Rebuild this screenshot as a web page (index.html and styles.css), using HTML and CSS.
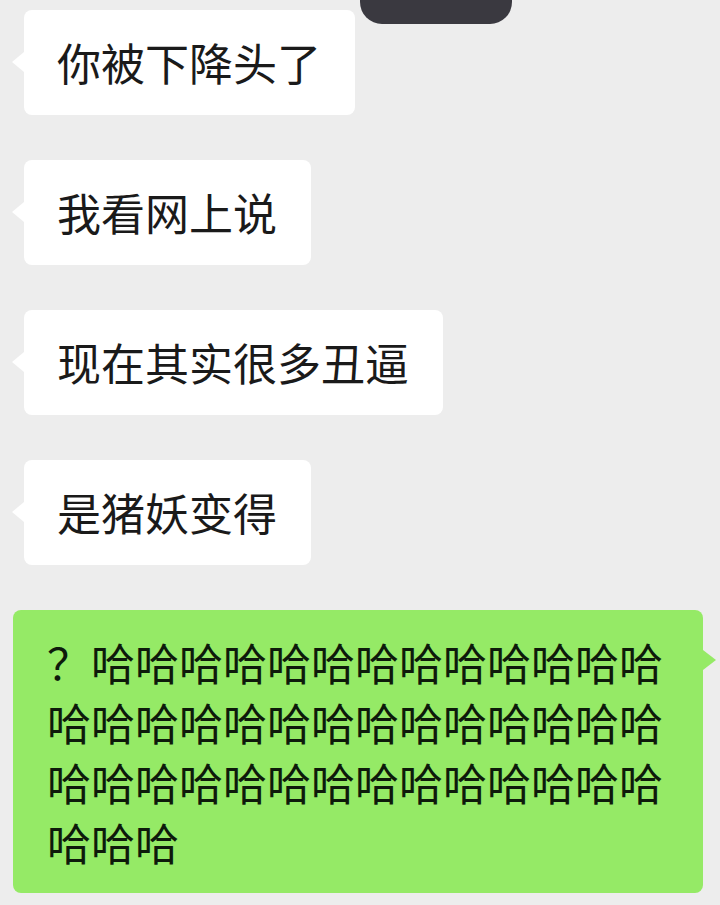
FILE: index.html
```html
<!DOCTYPE html>
<html lang="zh-CN">
<head>
<meta charset="utf-8">
<title>聊天</title>
<link rel="stylesheet" href="styles.css">
</head>
<body>
<div class="notch"></div>
<main class="chat">
  <div class="bubble in">你被下降头了</div>
  <div class="bubble in">我看网上说</div>
  <div class="bubble in">现在其实很多丑逼</div>
  <div class="bubble in">是猪妖变得</div>
  <div class="bubble out">？哈哈哈哈哈哈哈哈哈哈哈哈哈哈哈哈哈哈哈哈哈哈哈哈哈哈哈哈哈哈哈哈哈哈哈哈哈哈哈哈哈哈哈哈</div>
</main>
</body>
</html>
```
FILE: styles.css
```css
html, body {
  margin: 0;
  padding: 0;
}
body {
  background: #ededed;
  width: 720px;
  height: 905px;
  overflow: hidden;
  position: relative;
  font-family: "Noto Sans CJK SC", "Noto Sans", sans-serif;
}
.notch {
  position: absolute;
  left: 360px;
  top: 0;
  width: 152px;
  height: 24px;
  background: #3a3940;
  border-radius: 0 0 22px 22px;
}
.chat {
  display: flex;
  flex-direction: column;
  align-items: flex-start;
  gap: 45px;
  padding-top: 10px;
}
.bubble {
  position: relative;
  font-size: 44px;
  line-height: 60px;
  border-radius: 8px;
}
.bubble.in {
  margin-left: 24px;
  padding: 22px 34px 23px 33px;
  background: #ffffff;
  color: #1a1a1a;
}
.bubble.in::before {
  content: "";
  position: absolute;
  left: -12px;
  top: 42px;
  border-right: 12px solid #ffffff;
  border-top: 10px solid transparent;
  border-bottom: 10px solid transparent;
}
.bubble.out {
  margin-left: 13px;
  width: 622px;
  padding: 22px 34px 21px 34px;
  background: #95ea66;
  color: #0e1a0b;
  word-break: break-all;
}
.bubble.out::after {
  content: "";
  position: absolute;
  right: -13px;
  top: 40px;
  border-left: 13px solid #95ea66;
  border-top: 10px solid transparent;
  border-bottom: 10px solid transparent;
}
```
